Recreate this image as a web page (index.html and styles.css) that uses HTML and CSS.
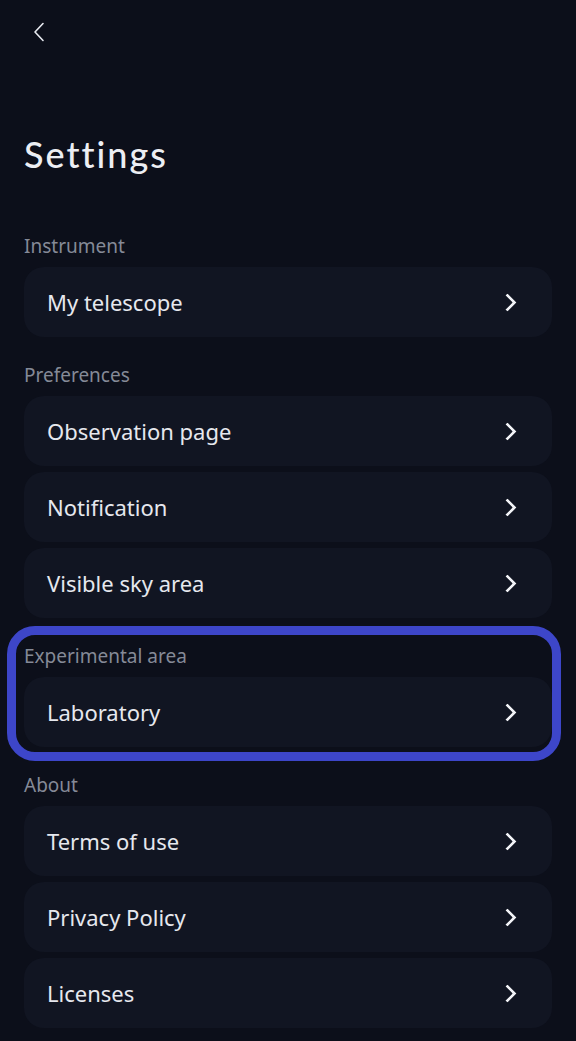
FILE: index.html
```html
<!DOCTYPE html>
<html lang="en">
  <head>
    <meta charset="UTF-8" />
    <meta name="viewport" content="width=device-width, initial-scale=1.0" />
    <title>Settings</title>
    <link rel="stylesheet" href="styles.css">
  </head>
  <body>
    <!-- Top bar -->
    <header class="top-bar">
      <a href="#" class="back-btn" aria-label="Back">
        <svg width="12" height="20" viewBox="0 0 12 20">
          <path d="M10 1.5 L2 10 L10 18.5" fill="none" stroke="#e8eaf0" stroke-width="1.6" stroke-linecap="round" stroke-linejoin="round" />
        </svg>
      </a>
    </header>

    <h1 class="page-title">Settings</h1>

    <main class="settings">
      <section class="group">
        <h2 class="group-label">Instrument</h2>
        <a href="#" class="row"><span>My telescope</span><i class="chevron"></i></a>
      </section>

      <section class="group">
        <h2 class="group-label">Preferences</h2>
        <a href="#" class="row"><span>Observation page</span><i class="chevron"></i></a>
        <a href="#" class="row"><span>Notification</span><i class="chevron"></i></a>
        <a href="#" class="row"><span>Visible sky area</span><i class="chevron"></i></a>
      </section>

      <!-- highlighted group -->
      <section class="group highlight">
        <h2 class="group-label">Experimental area</h2>
        <a href="#" class="row"><span>Laboratory</span><i class="chevron"></i></a>
      </section>

      <section class="group">
        <h2 class="group-label">About</h2>
        <a href="#" class="row"><span>Terms of use</span><i class="chevron"></i></a>
        <a href="#" class="row"><span>Privacy Policy</span><i class="chevron"></i></a>
        <a href="#" class="row"><span>Licenses</span><i class="chevron"></i></a>
      </section>
    </main>
  </body>
</html>
```

FILE: styles.css
```css
body {
  margin: 0;
  padding: 0 24px;
  min-height: 100vh;
  background: #0c0f1a;
  color: #e8eaf0;
  font-family: "Noto Sans", Roboto, sans-serif;
}

/* Top bar */
.top-bar {
  height: 64px;
  display: flex;
  align-items: flex-start;
  padding-top: 22px;
  box-sizing: border-box;
}
.back-btn {
  display: flex;
  margin-left: 9px;
}

.page-title {
  margin: 68px 0 0;
  font-family: Lato, "Open Sans", sans-serif;
  font-weight: 500;
  font-size: 36px;
  line-height: 44px;
  letter-spacing: 2px;
  color: #eceef3;
}

/* Groups */
.settings {
  display: flex;
  flex-direction: column;
  padding-bottom: 13px;
}
.group {
  display: flex;
  flex-direction: column;
  gap: 6px;
  margin-top: 26px;
}
.group:first-child {
  margin-top: 58px;
}
.group-label {
  margin: 0 0 3px;
  font-size: 19px;
  font-weight: 400;
  line-height: 24px;
  color: #858a97;
}
.group.highlight {
  margin: 8px -9px 0 -17px;
  padding: 9px 0 5px 8px;
  border: 9px solid #3d46c9;
  border-radius: 28px;
}
.group.highlight + .group {
  margin-top: 12px;
}

.row {
  display: flex;
  align-items: center;
  justify-content: space-between;
  height: 70px;
  padding: 0 35px 0 23px;
  border-radius: 20px;
  background: #111522;
  color: #e6e8ee;
  text-decoration: none;
  font-size: 22px;
}
.chevron {
  width: 10px;
  height: 10px;
  border-top: 3px solid #f2f3f7;
  border-right: 3px solid #f2f3f7;
  border-radius: 1px;
  transform: rotate(45deg);
  margin-right: 3px;
}
```
